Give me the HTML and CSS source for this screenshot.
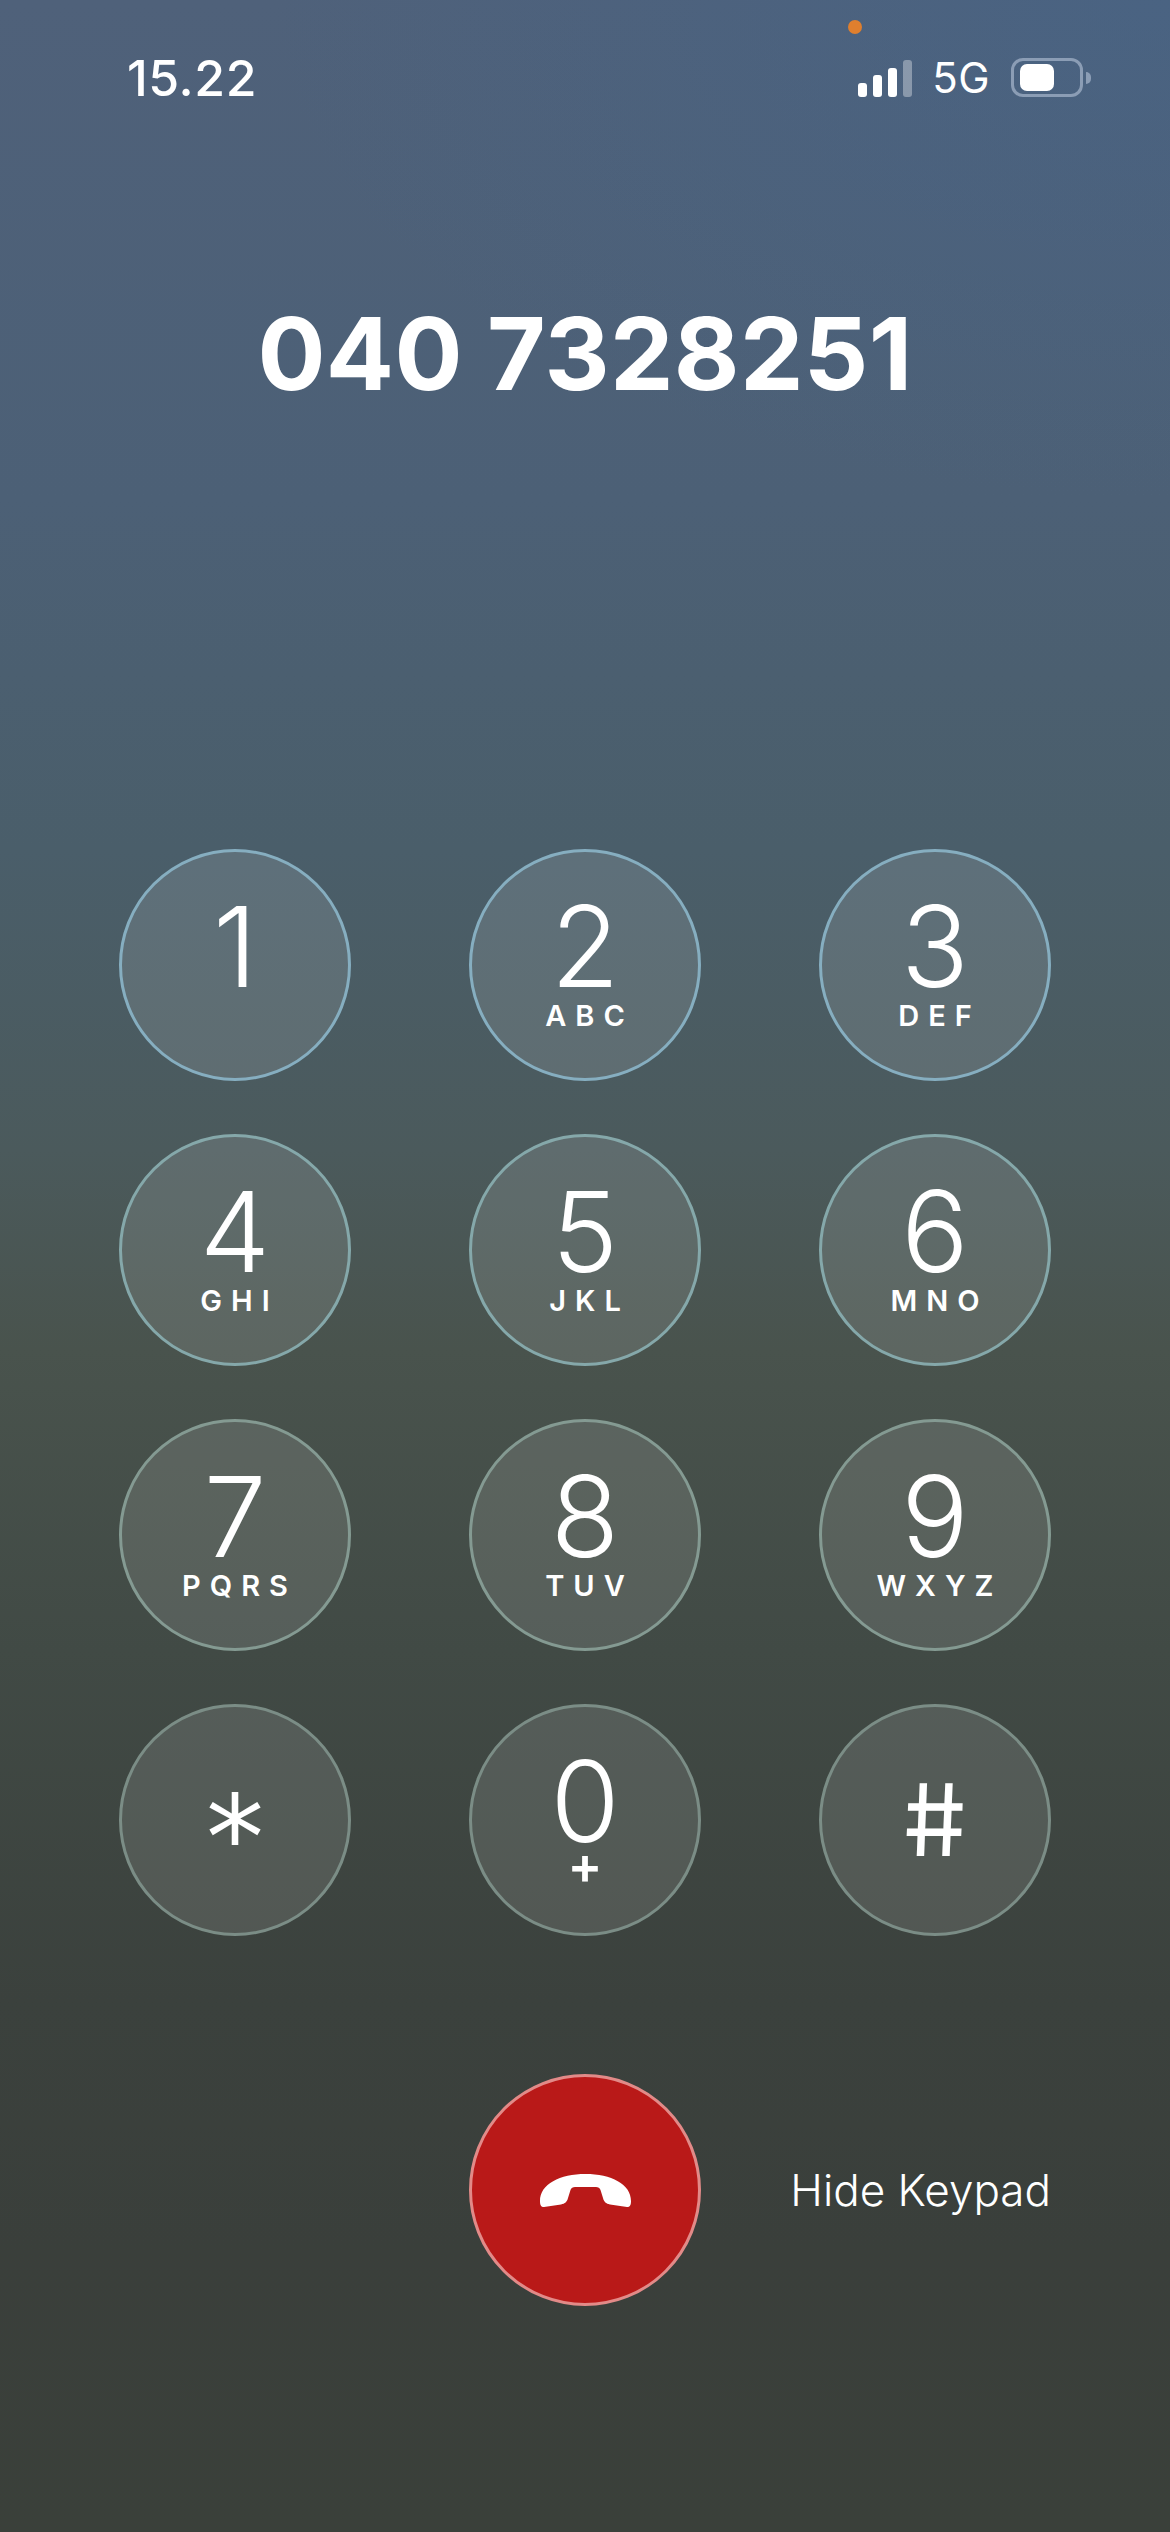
FILE: index.html
```html
<!DOCTYPE html>
<html lang="en">
<head>
	<meta charset="UTF-8">
	<meta name="viewport" content="width=device-width, initial-scale=1.0">
	<title>Call</title>
	<link rel="stylesheet" href="styles.css">
</head>
<body>
	<div class="screen">
		<span class="privacy-dot"></span>

		<header class="status-bar">
			<span class="time">15.22</span>
			<div class="status-icons">
				<div class="signal">
					<span class="bar bar-1"></span>
					<span class="bar bar-2"></span>
					<span class="bar bar-3"></span>
					<span class="bar bar-4"></span>
				</div>
				<span class="network">5G</span>
				<div class="battery">
					<div class="battery-body"><span class="battery-fill"></span></div>
					<span class="battery-nub"></span>
				</div>
			</div>
		</header>

		<h1 class="number">040 7328251</h1>

		<main class="keypad">
			<button class="key row-1"><span class="digit">1</span><span class="letters"></span></button>
			<button class="key row-1"><span class="digit">2</span><span class="letters">ABC</span></button>
			<button class="key row-1"><span class="digit">3</span><span class="letters">DEF</span></button>
			<button class="key row-2"><span class="digit">4</span><span class="letters">GHI</span></button>
			<button class="key row-2"><span class="digit">5</span><span class="letters">JKL</span></button>
			<button class="key row-2"><span class="digit">6</span><span class="letters">MNO</span></button>
			<button class="key row-3"><span class="digit">7</span><span class="letters">PQRS</span></button>
			<button class="key row-3"><span class="digit">8</span><span class="letters">TUV</span></button>
			<button class="key row-3"><span class="digit">9</span><span class="letters">WXYZ</span></button>
			<button class="key row-4 key-symbol"><span class="star">*</span></button>
			<button class="key row-4"><span class="digit">0</span><span class="plus">+</span></button>
			<button class="key row-4 key-symbol"><span class="hash">#</span></button>

			<button class="end-call" aria-label="End call">
				<svg class="end-icon" viewBox="0 0 91 33" width="91" height="33">
					<path d="M0 27C0 10 20 0 45.5 0S91 10 91 27C91 31 90 33 87 33L70 30.5C66 29.5 64 28 63 24L60.5 16C60 14 58 13 56 13H35C33 13 31 14 30.5 16L28 24C27 28 25 29.5 21 30.5L4 33C1 33 0 31 0 27Z"/>
				</svg>
			</button>
			<button class="hide-keypad">Hide Keypad</button>
		</main>
	</div>
</body>
</html>
```

FILE: styles.css
```css
html {
	box-sizing: border-box;
}
*, *:before, *:after {
	box-sizing: inherit;
}
body {
	margin: 0;
	background: #3a403a;
	color: #fff;
	font-family: Inter, "Liberation Sans", sans-serif;
}
button {
	margin: 0;
	padding: 0;
	color: inherit;
	font-family: inherit;
}
.screen {
	position: relative;
	height: 2532px;
	overflow: hidden;
	background:
		radial-gradient(900px 500px at 100% 0, rgba(66, 102, 142, .4), rgba(66, 102, 142, 0)),
		linear-gradient(180deg, #4f617a 0, #4c6076 500px, #4a5e6a 850px, #4b5a5c 1150px, #49534d 1350px, #414a45 1650px, #3b413d 2000px, #3a3f3b 2250px, #3a403a 2532px);
}
.privacy-dot {
	position: absolute;
	top: 20px;
	left: 848px;
	width: 14px;
	height: 14px;
	border-radius: 50%;
	background: #df7f2e;
}

/* status bar */
.status-bar {
	display: flex;
	justify-content: space-between;
	align-items: flex-end;
	height: 103px;
	padding: 0 79px 0 127px;
}
.time {
	font-size: 50px;
	font-weight: 500;
	line-height: 50px;
	letter-spacing: .6px;
}
.status-icons {
	display: flex;
	align-items: flex-end;
	padding-bottom: 6px;
}
.signal {
	display: flex;
	align-items: flex-end;
	gap: 6px;
	height: 37px;
}
.bar {
	width: 9px;
	border-radius: 3px;
	background: #fff;
}
.bar-1 { height: 14px; }
.bar-2 { height: 22px; }
.bar-3 { height: 29px; }
.bar-4 { height: 37px; background: rgba(255, 255, 255, .35); }
.network {
	margin-left: 20px;
	font-size: 42px;
	line-height: 38px;
	letter-spacing: .5px;
}
.battery {
	display: flex;
	align-items: center;
	margin-left: 21px;
}
.battery-body {
	display: flex;
	align-items: center;
	width: 72px;
	height: 39px;
	padding-left: 6px;
	border: 3px solid #8b9db5;
	border-radius: 12px;
}
.battery-fill {
	width: 34px;
	height: 27px;
	border-radius: 7px;
	background: #fff;
}
.battery-nub {
	width: 5px;
	height: 12px;
	margin-left: 3px;
	border-radius: 0 6px 6px 0;
	background: #8b9db5;
}

/* dialled number */
.number {
	margin: 200px 0 0;
	font-size: 101px;
	font-weight: 700;
	line-height: 100px;
	letter-spacing: .3px;
	text-align: center;
}

/* keypad */
.keypad {
	display: grid;
	grid-template-columns: repeat(3, 232px);
	justify-content: space-between;
	row-gap: 53px;
	margin: 446px 119px 0;
}
.key, .end-call {
	display: flex;
	flex-direction: column;
	align-items: center;
	width: 232px;
	height: 232px;
	border-radius: 50%;
	border: 3px solid;
}
.key {
	padding-top: 40px;
	background: rgba(255, 255, 255, .115);
}
.row-1 { border-color: #86aec0; }
.row-2 { border-color: #85a8aa; }
.row-3 { border-color: #849a92; }
.row-4 { border-color: #7b8d86; }
.digit {
	font-size: 112px;
	font-weight: 350;
	line-height: 108px;
}
.letters {
	height: 30px;
	margin: 1px -9px 0 0;
	font-size: 29px;
	font-weight: 600;
	line-height: 30px;
	letter-spacing: 9px;
}
.plus {
	margin-top: -9px;
	font-size: 52px;
	font-weight: 600;
	line-height: 40px;
}
.key-symbol {
	justify-content: center;
	padding-top: 0;
}
.star {
	padding-top: 36px;
	font-family: "DejaVu Sans", sans-serif;
	font-size: 116px;
	line-height: 110px;
}
.hash {
	display: inline-block;
	font-size: 100px;
	font-weight: 400;
	line-height: 100px;
	transform: skewX(7deg);
}

/* bottom row */
.end-call {
	grid-column: 2;
	justify-content: center;
	margin-top: 85px;
	background: #b91918;
	border-color: #e28a88;
}
.end-icon {
	fill: #fff;
}
.hide-keypad {
	align-self: center;
	justify-self: end;
	margin-top: 85px;
	border: 0;
	background: none;
	font-size: 44px;
	font-weight: 300;
	line-height: 54px;
	white-space: nowrap;
}
```
